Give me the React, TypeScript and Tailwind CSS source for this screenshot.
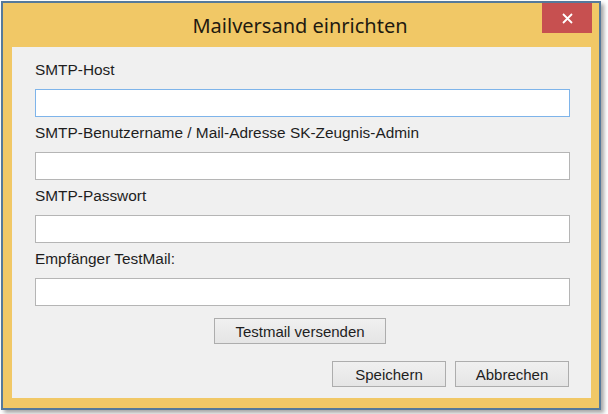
const fields = [
  { label: "SMTP-Host", focused: true },
  { label: "SMTP-Benutzername / Mail-Adresse SK-Zeugnis-Admin", focused: false },
  { label: "SMTP-Passwort", focused: false },
  { label: "Empfänger TestMail:", focused: false },
];

const btn =
  "h-[26px] border border-[#adadad] bg-gradient-to-b from-[#f0f0f0] to-[#e5e5e5] text-[15px] text-[#1e1e1e] leading-none";

export default function App() {
  return (
    <div className="w-[608px] h-[414px] bg-white font-['Liberation_Sans',Arial,sans-serif]">
      <div className="ml-[1px] mt-[1px] w-[600px] h-[409px] border-2 border-[#55799b] bg-[#f1c866] flex flex-col shadow-[3px_3px_4px_rgba(0,0,0,0.35)]">
        {/* title bar */}
        <div className="relative h-[44px] shrink-0 flex items-center justify-center">
          <span className="text-[20px] text-[#1f1a10] font-['Noto_Sans',sans-serif] pt-[2px] pr-[2px]">
            Mailversand einrichten
          </span>
          <button className="absolute top-0 right-[7px] w-[50px] h-[30px] bg-[#c75050] flex items-center justify-center">
            <svg width="11" height="11" viewBox="0 0 11 11">
              <path d="M1 1L10 10M10 1L1 10" stroke="white" strokeWidth="1.8" />
            </svg>
          </button>
        </div>
        {/* client area */}
        <div className="ml-[9px] mr-[8px] mb-[10px] flex-1 bg-[#f0f0f0] pl-[23px] pr-[20px] pt-[13px] flex flex-col">
          {fields.map((f) => (
            <div key={f.label} className="flex flex-col">
              <div className="h-[19px] text-[15.4px] text-[#1e1e1e] leading-[19px]">{f.label}</div>
              <div
                className={`mt-[10px] mb-[6px] h-[28px] w-[535px] bg-white border ${
                  f.focused ? "border-[#7eb4ea]" : "border-[#b5b5b5]"
                }`}
              />
            </div>
          ))}
          <div className="flex justify-center pr-[6px] mt-[6px]">
            <button className={`${btn} w-[172px]`}>Testmail versenden</button>
          </div>
          <div className="flex justify-end gap-[9px] mt-[17px] pr-[2px]">
            <button className={`${btn} w-[114px]`}>Speichern</button>
            <button className={`${btn} w-[114px]`}>Abbrechen</button>
          </div>
        </div>
      </div>
    </div>
  );
}
